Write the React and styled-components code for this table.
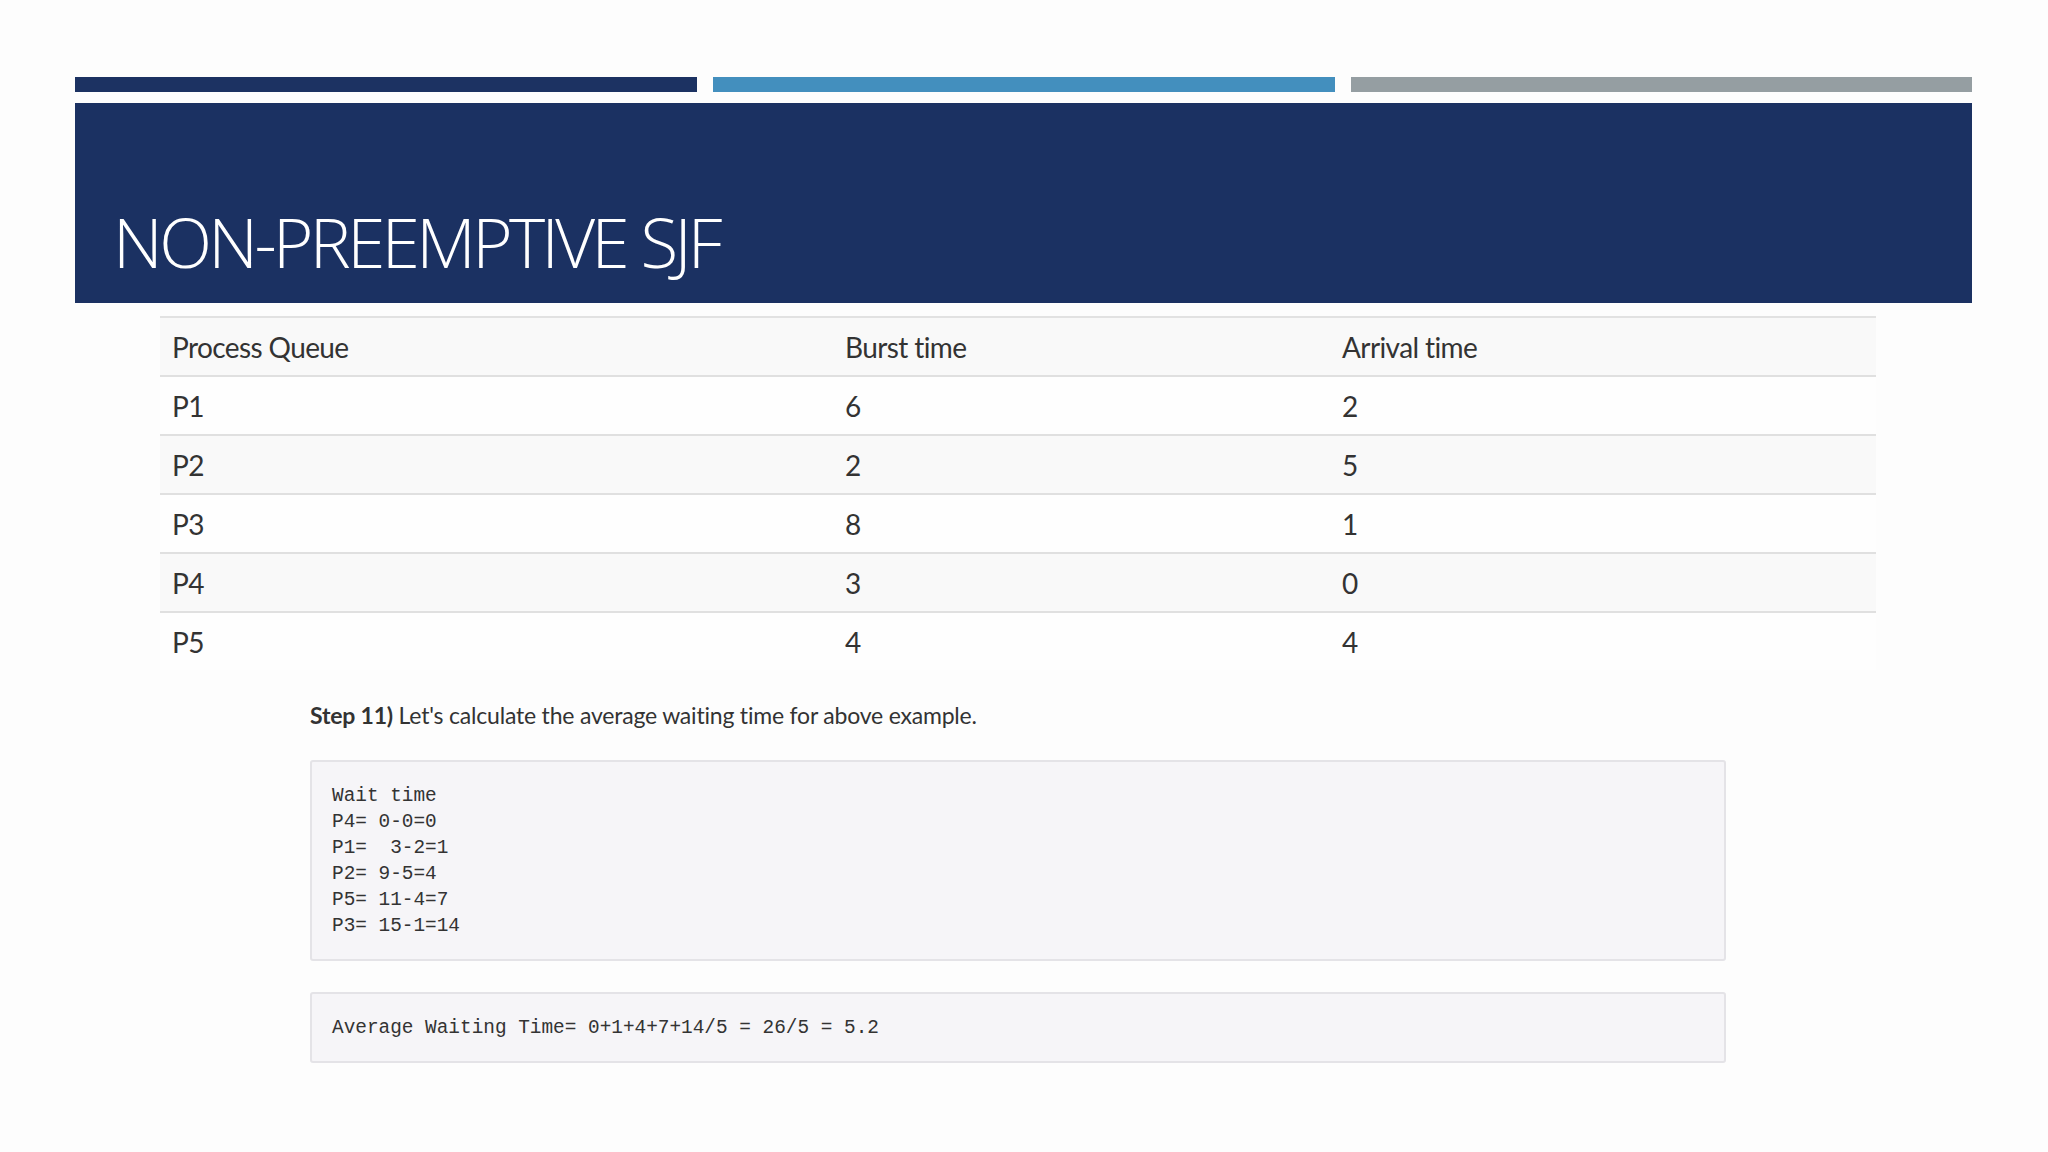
import React from "react";
import styled, { createGlobalStyle } from "styled-components";

const Global = createGlobalStyle`
  html, body { margin: 0; padding: 0; background: #fdfdfd; }
  body { width: 2048px; height: 1152px; overflow: hidden; }
`;

const Slide = styled.div`
  width: 2048px;
  height: 1152px;
  box-sizing: border-box;
  padding: 77px 76px 0 75px;
  background: #fdfdfd;
  display: flex;
  flex-direction: column;
`;

const Bars = styled.div`
  display: grid;
  grid-template-columns: 622px 622px 1fr;
  column-gap: 16px;
  height: 15px;
`;

const Bar = styled.div`
  background: ${(p) => p.$color};
`;

const Banner = styled.header`
  margin-top: 11px;
  height: 200px;
  background: #1b3162;
  display: flex;
  align-items: flex-end;
  padding: 0 0 27px 38px;
  box-sizing: border-box;
`;

const Title = styled.h1`
  margin: 0;
  font-family: "Open Sans", "Liberation Sans", sans-serif;
  font-weight: 300;
  font-size: 69px;
  line-height: 1;
  letter-spacing: -3.6px;
  color: #ffffff;
`;

const Table = styled.div`
  margin: 13px 0 0 85px;
  width: 1716px;
  display: grid;
  grid-template-columns: 673px 497px 1fr;
  border-top: 2px solid #e2e2e2;
  font-family: "Lato", "Liberation Sans", sans-serif;
  font-size: 28px;
  color: #333333;
`;

const Cell = styled.div`
  height: 57px;
  display: flex;
  align-items: center;
  padding-left: 12px;
  letter-spacing: -0.6px;
  background: ${(p) => (p.$shade ? "#f9f9f9" : "#fefefe")};
  border-bottom: ${(p) => (p.$last ? "none" : "2px solid #e0e0e0")};
`;

const Content = styled.div`
  margin-left: 235px;
  width: 1416px;
  display: flex;
  flex-direction: column;
`;

const Step = styled.p`
  margin: 31px 0 0 0;
  font-family: "Lato", "Liberation Sans", sans-serif;
  font-size: 23px;
  letter-spacing: -0.2px;
  color: #333333;
  b { font-weight: 700; }
`;

const Pre = styled.pre`
  margin: ${(p) => p.$mt}px 0 0 0;
  padding: 21px 20px 20px;
  background: #f6f5f8;
  border: 2px solid #e4e3e7;
  border-radius: 3px;
  font-family: "Liberation Mono", "DejaVu Sans Mono", monospace;
  font-size: 19.4px;
  line-height: 26px;
  color: #333333;
  white-space: pre;
`;

const rows = [
  ["P1", "6", "2"],
  ["P2", "2", "5"],
  ["P3", "8", "1"],
  ["P4", "3", "0"],
  ["P5", "4", "4"],
];

export default function App() {
  return (
    <>
      <Global />
      <Slide>
        <Bars>
          <Bar $color="#1c3262" />
          <Bar $color="#438fbe" />
          <Bar $color="#959ea2" />
        </Bars>
        <Banner>
          <Title>NON-PREEMPTIVE SJF</Title>
        </Banner>
        <Table>
          {["Process Queue", "Burst time", "Arrival time"].map((h) => (
            <Cell key={h} $shade>
              {h}
            </Cell>
          ))}
          {rows.map((r, i) =>
            r.map((c, j) => (
              <Cell key={`${i}-${j}`} $shade={i % 2 === 1} $last={i === rows.length - 1}>
                {c}
              </Cell>
            ))
          )}
        </Table>
        <Content>
          <Step>
            <b>Step 11)</b> Let's calculate the average waiting time for above example.
          </Step>
          <Pre $mt={31}>{`Wait time
P4= 0-0=0
P1=  3-2=1
P2= 9-5=4
P5= 11-4=7
P3= 15-1=14`}</Pre>
          <Pre $mt={31}>{`Average Waiting Time= 0+1+4+7+14/5 = 26/5 = 5.2`}</Pre>
        </Content>
      </Slide>
    </>
  );
}
